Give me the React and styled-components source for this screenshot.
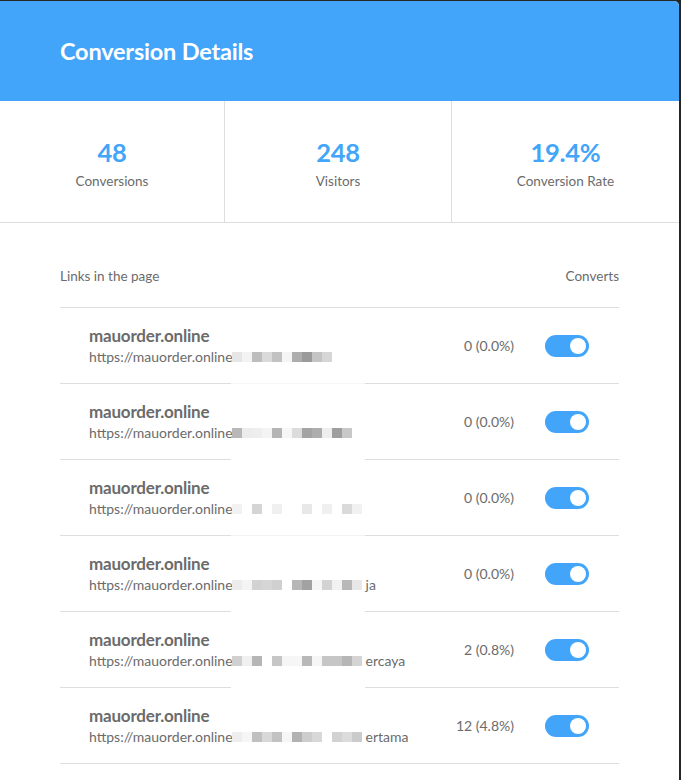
import React from "react";
import styled, { createGlobalStyle } from "styled-components";

const GlobalStyle = createGlobalStyle`
  html, body {
    margin: 0;
    padding: 0;
    background: #262626;
  }
  body {
    font-family: Lato, "Open Sans", sans-serif;
  }
`;

const stats = [
  { value: "48", label: "Conversions" },
  { value: "248", label: "Visitors" },
  { value: "19.4%", label: "Conversion Rate" },
];

// pixelated (redacted) part of each url
const links = [
  { count: "0 (0.0%)", cells: ["#e6e6e6", "#f3f3f3", "#bdbdbd", "#dadada", "#c2c2c2", "#f5f5f5", "#adadad", "#9a9a9a", "#c4c4c4", "#d6d6d6"], suffix: "", gap: "#f6f6f6" },
  { count: "0 (0.0%)", cells: ["#b8b8b8", "#ececec", "#eeeeee", "#f4f4f4", "#b5b5b5", "#f6f6f6", "#dcdcdc", "#a4a4a4", "#aeaeae", "#eeeeee", "#9e9e9e", "#c8c8c8"], suffix: "", gap: "#fff" },
  { count: "0 (0.0%)", cells: ["#f2f2f2", "#fff", "#d5d5d5", "#fff", "#f0f0f0", "#fff", "#fff", "#e8e8e8", "#fff", "#f0f0f0", "#fff", "#dadada", "#f1f1f1"], suffix: "", gap: "#f3f3f3" },
  { count: "0 (0.0%)", cells: ["#ececec", "#f4f4f4", "#d2d2d2", "#d6d6d6", "#d0d0d0", "#fff", "#b7b7b7", "#a2a2a2", "#f6f6f6", "#d3d3d3", "#f2f2f2", "#b8b8b8", "#e8e8e8"], suffix: "ja", gap: "#fff" },
  { count: "2 (0.8%)", cells: ["#d0d0d0", "#f0f0f0", "#b6b6b6", "#fff", "#c6c6c6", "#f6f6f6", "#f6f6f6", "#b8b8b8", "#f6f6f6", "#c6c6c6", "#c6c6c6", "#b6b6b6", "#d4d4d4"], suffix: "ercaya", gap: "#fff" },
  { count: "12 (4.8%)", cells: ["#eeeeee", "#f6f6f6", "#c0c0c0", "#d8d8d8", "#c2c2c2", "#f6f6f6", "#b2b2b2", "#cdcdcd", "#d8d8d8", "#fff", "#d2d2d2", "#dcdcdc", "#cbcbcb"], suffix: "ertama", gap: null },
];

export default function App() {
  return (
    <>
      <GlobalStyle />
      <Card>
        <Header>
          <Title>Conversion Details</Title>
        </Header>
        <Stats>
          {stats.map(s => (
            <Stat key={s.label}>
              <StatValue>{s.value}</StatValue>
              <StatLabel>{s.label}</StatLabel>
            </Stat>
          ))}
        </Stats>
        <List>
          <ListHead>
            <span>Links in the page</span>
            <span>Converts</span>
          </ListHead>
          {links.map((l, i) => (
            <Row key={i} gap={l.gap}>
              <LinkInfo>
                <LinkName>mauorder.online</LinkName>
                <LinkUrl>
                  <UrlText>https://mauorder.online</UrlText>
                  <Mosaic>
                    {l.cells.map((c, j) => (
                      <Cell key={j} style={{ background: c }} />
                    ))}
                  </Mosaic>
                  {l.suffix && <UrlText>{l.suffix}</UrlText>}
                </LinkUrl>
              </LinkInfo>
              <Count>{l.count}</Count>
              <Toggle>
                <Knob />
              </Toggle>
            </Row>
          ))}
        </List>
      </Card>
    </>
  );
}

const Card = styled.div`
  margin-top: 1px;
  width: 679px;
  min-height: 779px;
  background: #fff;
  border-top-right-radius: 5px;
  overflow: hidden;
`;

const Header = styled.div`
  height: 100px;
  background: #42a5f9;
  display: flex;
  align-items: center;
  padding: 0 60px;
  box-sizing: border-box;
`;

const Title = styled.h1`
  margin: 0;
  color: #fff;
  font-size: 23.5px;
  font-weight: 700;
  letter-spacing: -0.2px;
`;

const Stats = styled.div`
  display: grid;
  grid-template-columns: 225px 227px 1fr;
  border-bottom: 1px solid #dedede;
`;

const Stat = styled.div`
  display: flex;
  flex-direction: column;
  align-items: center;
  padding: 36px 0 31px;
  border-right: 1px solid #dedede;
  &:last-child {
    border-right: none;
  }
`;

const StatValue = styled.div`
  color: #42a5f9;
  font-size: 25.5px;
  font-weight: 700;
  line-height: 30px;
  letter-spacing: -0.3px;
`;

const StatLabel = styled.div`
  margin-top: 4px;
  color: #6b6b6b;
  font-size: 13.5px;
  line-height: 20px;
`;

const List = styled.div`
  padding: 0 60px;
`;

const ListHead = styled.div`
  display: flex;
  justify-content: space-between;
  padding: 45px 0 23px;
  line-height: 16px;
  font-size: 13.5px;
  color: #6b6b6b;
  border-bottom: 1px solid #dedede;
`;

const Row = styled.div`
  position: relative;
  display: flex;
  align-items: center;
  height: 75px;
  padding: 0 30px 0 29px;
  border-bottom: 1px solid #dedede;
  &::after {
    content: "";
    display: ${props => (props.gap ? "block" : "none")};
    position: absolute;
    left: 171px;
    bottom: -1px;
    width: 134px;
    height: 1px;
    background: ${props => props.gap};
  }
`;

const LinkInfo = styled.div`
  flex: 1;
  display: flex;
  flex-direction: column;
`;

const LinkName = styled.div`
  font-size: 17px;
  font-weight: 700;
  line-height: 20px;
  color: #6b6b6b;
  letter-spacing: -0.2px;
`;

const LinkUrl = styled.div`
  display: flex;
  align-items: center;
  margin-top: 2px;
  height: 18px;
  font-size: 14px;
  color: #6b6b6b;
`;

const UrlText = styled.span`
  line-height: 18px;
`;

const Mosaic = styled.span`
  display: flex;
  width: 134px;
  margin-left: -1px;
`;

const Cell = styled.span`
  width: 10px;
  height: 10px;
  flex-shrink: 0;
`;

const Count = styled.div`
  font-size: 14px;
  color: #6b6b6b;
  margin-right: 31px;
`;

const Toggle = styled.div`
  width: 44px;
  height: 22px;
  border-radius: 11px;
  background: #42a5f9;
  display: flex;
  align-items: center;
  justify-content: flex-end;
  padding: 0 3px;
  box-sizing: border-box;
`;

const Knob = styled.span`
  width: 16px;
  height: 16px;
  border-radius: 50%;
  background: #fff;
`;
